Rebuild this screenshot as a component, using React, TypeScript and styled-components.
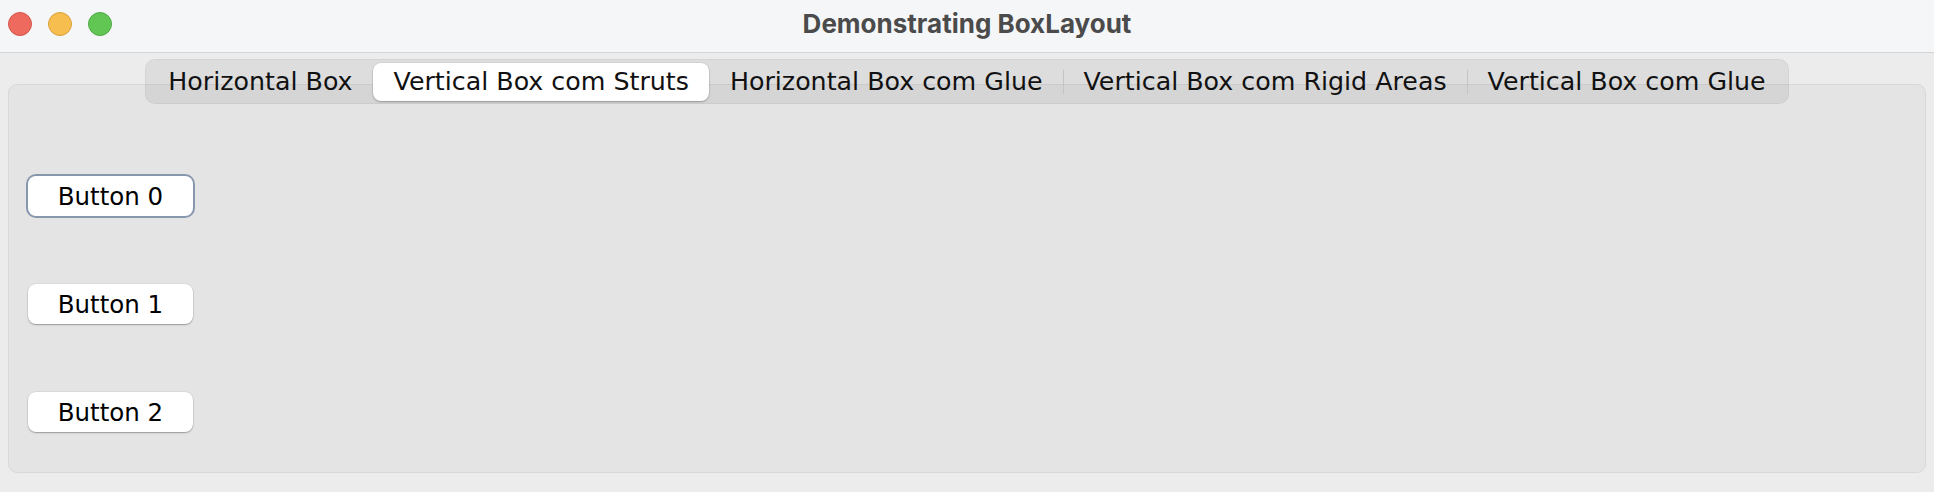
import React from "react";
import styled, { createGlobalStyle } from "styled-components";

const GlobalStyle = createGlobalStyle`
  html, body {
    margin: 0;
    padding: 0;
    background: #ececec;
  }
  * { box-sizing: border-box; }
`;

const Window = styled.div`
  width: 1934px;
  height: 492px;
  display: flex;
  flex-direction: column;
  background: #ececec;
  overflow: hidden;
`;

const TitleBar = styled.div`
  height: 53px;
  flex: none;
  display: grid;
  grid-template-columns: 1fr auto 1fr;
  align-items: center;
  background: #f5f6f8;
  border-bottom: 1px solid #d3d3d5;
`;

const Lights = styled.div`
  display: flex;
  gap: 16px;
  padding-left: 8px;
  align-self: start;
  padding-top: 12px;
`;

const Light = styled.span<{ $fill: string; $edge: string }>`
  width: 24px;
  height: 24px;
  border-radius: 50%;
  background: ${(p) => p.$fill};
  border: 1px solid ${(p) => p.$edge};
`;

const Title = styled.div`
  font-family: Inter, "DejaVu Sans", sans-serif;
  font-weight: 700;
  font-size: 26px;
  color: #4b4b4b;
  margin-top: -6px;
`;

const Body = styled.div`
  flex: 1;
  display: flex;
  flex-direction: column;
  align-items: center;
  padding: 6px 8px 19px;
`;

const TabBar = styled.div`
  position: relative;
  z-index: 1;
  height: 45px;
  display: flex;
  align-items: center;
  padding: 2px;
  border-radius: 10px;
  background: rgba(0, 0, 0, 0.062);
  border: 1px solid rgba(0, 0, 0, 0.04);
`;

const Tab = styled.div<{ $active?: boolean; $sep?: boolean }>`
  position: relative;
  height: 38px;
  display: flex;
  align-items: center;
  padding: 0 20.5px;
  font-family: "DejaVu Sans", sans-serif;
  font-size: 25.3px;
  color: #111;
  white-space: nowrap;
  border-radius: 8px;
  background: ${(p) => (p.$active ? "#ffffff" : "transparent")};
  box-shadow: ${(p) =>
    p.$active ? "0 1px 2px rgba(0,0,0,0.28), 0 0 0 0.5px rgba(0,0,0,0.08)" : "none"};
  &::before {
    content: "";
    display: ${(p) => (p.$sep ? "block" : "none")};
    position: absolute;
    left: 0;
    top: 7px;
    width: 1px;
    height: 24px;
    background: #c4c4c4;
  }
`;

const Panel = styled.div`
  align-self: stretch;
  flex: 1;
  margin-top: -20px;
  background: #e4e4e4;
  border: 1px solid #d8d8d8;
  border-radius: 9px;
  display: flex;
  flex-direction: column;
  align-items: flex-start;
  gap: 68px;
  padding: 91px 0 0 19px;
`;

const Button = styled.button<{ $focused?: boolean }>`
  width: 165px;
  height: 40px;
  border-radius: 8px;
  border: none;
  background: #ffffff;
  font-family: "DejaVu Sans", sans-serif;
  font-size: 24.5px;
  color: #000;
  padding: 0;
  box-shadow: ${(p) =>
    p.$focused
      ? "0 0 0 2px #8797ae"
      : "0 1px 1.5px rgba(0,0,0,0.3), 0 0 0 0.5px rgba(0,0,0,0.08)"};
`;

const tabs = [
  "Horizontal Box",
  "Vertical Box com Struts",
  "Horizontal Box com Glue",
  "Vertical Box com Rigid Areas",
  "Vertical Box com Glue",
];
const active = 1;

export default function App() {
  return (
    <>
      <GlobalStyle />
      <Window>
        <TitleBar>
          <Lights>
            <Light $fill="#ee6a5f" $edge="#d4564a" />
            <Light $fill="#f6be4f" $edge="#d9a23e" />
            <Light $fill="#62c655" $edge="#4fa943" />
          </Lights>
          <Title>Demonstrating BoxLayout</Title>
          <div />
        </TitleBar>
        <Body>
          <TabBar>
            {tabs.map((t, i) => (
              <Tab
                key={t}
                $active={i === active}
                $sep={i > 0 && i !== active && i - 1 !== active}
              >
                {t}
              </Tab>
            ))}
          </TabBar>
          <Panel>
            <Button $focused>Button 0</Button>
            <Button>Button 1</Button>
            <Button>Button 2</Button>
          </Panel>
        </Body>
      </Window>
    </>
  );
}
